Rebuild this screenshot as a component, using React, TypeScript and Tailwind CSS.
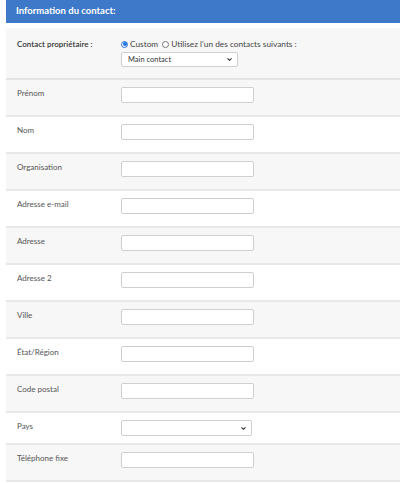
import { ChevronDown } from "lucide-react";

const fields: { label: string; kind: "input" | "select" }[] = [
  { label: "Prénom", kind: "input" },
  { label: "Nom", kind: "input" },
  { label: "Organisation", kind: "input" },
  { label: "Adresse e-mail", kind: "input" },
  { label: "Adresse", kind: "input" },
  { label: "Adresse 2", kind: "input" },
  { label: "Ville", kind: "input" },
  { label: "État/Région", kind: "input" },
  { label: "Code postal", kind: "input" },
  { label: "Pays", kind: "select" },
  { label: "Téléphone fixe", kind: "input" },
];

const Radio = ({ checked }: { checked?: boolean }) => (
  <span
    className={
      checked
        ? "w-[7px] h-[7px] rounded-full border border-[#2b6fd6] bg-white flex items-center justify-center"
        : "w-[7px] h-[7px] rounded-full border border-[#777] bg-white"
    }
  >
    {checked && <span className="w-[4px] h-[4px] rounded-full bg-[#1a73e8]" />}
  </span>
);

export default function App() {
  return (
    <div className="w-[400px] h-[484px] overflow-hidden bg-white pl-[6px] font-['Lato','Open_Sans',sans-serif] text-[8px]">
      <div className="h-[23px] bg-[#3e78c8] flex items-center pl-[10px] text-white font-bold text-[9.5px]">
        Information du contact:
      </div>

      <div className="mt-[5px] flex flex-col">
        <div className="h-[52px] bg-[#f7f7f7] border-b-2 border-[#e4e4e4] flex pl-[11px] pt-[10px]">
          <div className="w-[104px] font-semibold text-[#333] leading-[12px]">Contact propriétaire :</div>
          <div className="flex flex-col gap-[2px]">
            <div className="flex items-center gap-[2px] text-[#444] text-[8.3px] leading-[12px]">
              <Radio checked />
              <span className="mr-[2px]">Custom</span>
              <Radio />
              <span>Utilisez l'un des contacts suivants :</span>
            </div>
            <div className="w-[117px] h-[15px] bg-white border border-[#cfcfcf] rounded-[2px] flex items-center justify-between pl-[6px] pr-[4px] text-[7.5px] text-[#333]">
              <span>Main contact</span>
              <ChevronDown size={7} strokeWidth={3.5} className="text-[#333]" />
            </div>
          </div>
        </div>

        {fields.map((f, i) => (
          <div
            key={f.label}
            className={
              (f.kind === "select" ? "h-[32px] " : "h-[37px] ") +
              (i % 2 === 0 ? "bg-[#f7f7f7] " : "bg-white ") +
              "border-b-2 border-[#e8e8e8] flex pl-[11px]"
            }
          >
            <div className="w-[104px] pt-[7px] text-[#555] leading-[12px]">{f.label}</div>
            {f.kind === "input" ? (
              <div className="mt-[7px] w-[133px] h-[16px] bg-white border border-[#cfcfcf] rounded-[2px]" />
            ) : (
              <div className="mt-[7px] w-[131px] h-[16px] bg-white border border-[#cfcfcf] rounded-[2px] flex items-center justify-end pr-[4px]">
                <ChevronDown size={7} strokeWidth={3.5} className="text-[#333]" />
              </div>
            )}
          </div>
        ))}
      </div>
    </div>
  );
}
